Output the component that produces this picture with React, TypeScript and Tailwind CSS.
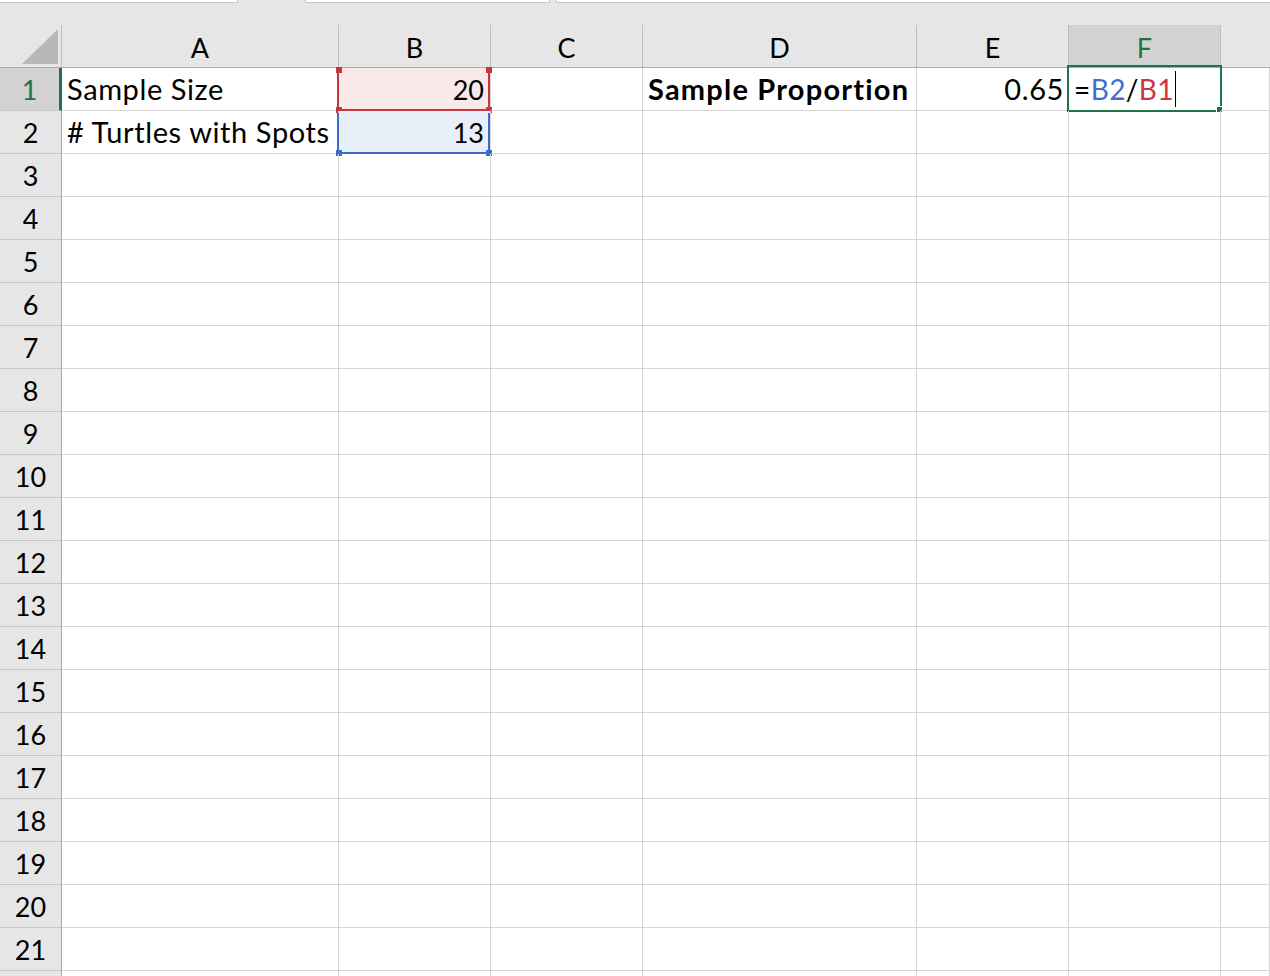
import React from 'react';

const cols = ['A', 'B', 'C', 'D', 'E', 'F', ''];
const grid = 'grid grid-cols-[62px_277px_152px_152px_274px_152px_152px_1fr]';

const RED = '#c4373d';
const BLUE = '#3a6ccb';

const Handle = ({ className, color }: { className: string; color: string }) => (
  <div className={`absolute w-[6px] h-[6px] ${className}`} style={{ backgroundColor: color }} />
);

function Cell({ r, c }: { r: number; c: number }) {
  const base = 'relative h-[43px] border-r border-b border-[#d4d4d4] flex items-end pb-[7px] whitespace-nowrap';
  const txt = 'text-[29px] tracking-[0.6px] pb-[6px]';

  if (r === 1 && c === 0) return <div className={`${base} ${txt} pl-[5px]`}>Sample Size</div>;
  if (r === 2 && c === 0) return <div className={`${base} ${txt} pl-[5px]`}># Turtles with Spots</div>;

  if (r === 1 && c === 1)
    return (
      <div className={`${base} justify-end pr-[6px] bg-[#f9e9e9]`}>
        20
        <div className="absolute left-[-2px] right-0 top-0 bottom-[-1px] border-l-2 border-r-2 border-b-2 border-[#c4373d]" />
        <Handle className="left-[-3px] top-[-1px]" color={RED} />
        <Handle className="right-[-2px] top-[-1px]" color={RED} />
        <Handle className="left-[-3px] bottom-[-3px]" color={RED} />
        <Handle className="right-[-2px] bottom-[-3px]" color={RED} />
      </div>
    );
  if (r === 2 && c === 1)
    return (
      <div className={`${base} justify-end pr-[6px] bg-[#e8eff9]`}>
        13
        <div className="absolute left-[-2px] right-0 top-[2px] bottom-[-1px] border-l-2 border-r-2 border-b-2 border-[#3a6ccb]" />
        <Handle className="left-[-3px] bottom-[-3px]" color={BLUE} />
        <Handle className="right-[-2px] bottom-[-3px]" color={BLUE} />
      </div>
    );

  if (r === 1 && c === 3)
    return <div className={`${base} text-[29px] tracking-[1.2px] pb-[6px] pl-[5px] font-bold`}>Sample Proportion</div>;
  if (r === 1 && c === 4) return <div className={`${base} ${txt} justify-end pr-[4px]`}>0.65</div>;

  if (r === 1 && c === 5)
    return (
      <div className={`${base} pl-[5px] pb-[6px] text-[28px] tracking-[0.4px]`}>
        <span>=</span>
        <span className="text-[#3e6fd1]">B2</span>
        <span>/</span>
        <span className="text-[#c8373f]">B1</span>
        <span className="ml-[1px] mb-[-4px] w-px h-[36px] bg-black" />
        <div className="absolute left-[-2px] right-[-2px] top-[-3px] bottom-[-2px] border-2 border-[#217346]" />
        <div className="absolute right-[-3px] bottom-[-3px] w-[7px] h-[7px] bg-[#217346] border border-white" />
      </div>
    );

  return <div className={base} />;
}

export default function App() {
  const rows = Array.from({ length: 22 }, (_, i) => i + 1);
  return (
    <div className="w-[1270px] h-[976px] overflow-hidden bg-white text-black text-[27px] leading-none font-['Lato',sans-serif]">
      {/* top strip */}
      <div className="flex h-[25px] bg-[#e6e6e6] items-start">
        <div className="w-[238px] h-[3px] bg-white border-r border-b border-[#c6c6c6]" />
        <div className="w-[67px]" />
        <div className="w-[245px] h-[3px] bg-white border-l border-r border-b border-[#c6c6c6]" />
        <div className="w-[6px]" />
        <div className="flex-1 h-[3px] bg-white border-l border-b border-[#c6c6c6]" />
      </div>

      {/* column headers */}
      <div className={`${grid} bg-[#e6e6e6] border-b border-[#ababab] h-[43px]`}>
        <div className="flex items-end justify-end pr-[3px] pb-[3px] border-r border-[#bdbdbd]">
          <svg width="36" height="35" viewBox="0 0 36 35">
            <polygon points="36,0 36,35 0,35" fill="#b8b8b8" />
          </svg>
        </div>
        {cols.map((c, i) => (
          <div
            key={i}
            className={`flex items-end justify-center pb-[6px] ${i < 6 ? 'border-r border-[#bdbdbd]' : ''} ${c === 'F' ? 'bg-[#d2d2d2] text-[#217346]' : ''}`}
          >
            {c}
          </div>
        ))}
      </div>

      {/* rows */}
      {rows.map((r) => (
        <div key={r} className={grid}>
          <div
            className={`h-[43px] flex items-end justify-center pb-[7px] border-b border-[#c6c6c6] ${
              r === 1 ? 'bg-[#d2d2d2] text-[#217346] border-r-[3px] border-r-[#217346]' : 'bg-[#e6e6e6] border-r border-r-[#ababab]'
            }`}
          >
            {r < 22 ? r : ''}
          </div>
          {cols.map((_, c) => (
            <Cell key={c} r={r} c={c} />
          ))}
        </div>
      ))}
    </div>
  );
}
